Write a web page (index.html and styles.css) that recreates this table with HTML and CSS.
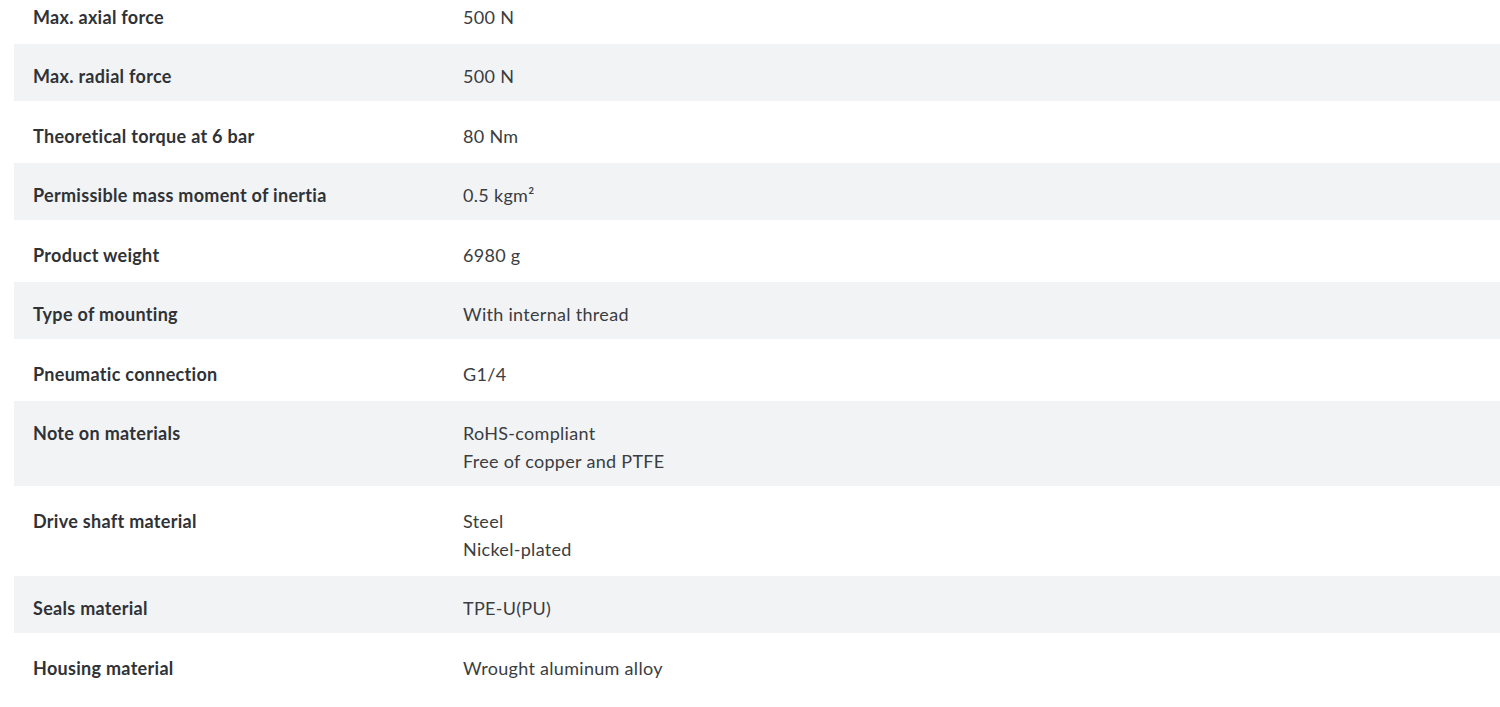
FILE: index.html
```html
<!DOCTYPE html>
<html lang="en">
<head>
<meta charset="utf-8">
<title>Technical data</title>
<link rel="stylesheet" href="styles.css">
</head>
<body>
<div class="specs">
  <div class="row"><div class="label">Max. axial force</div><div class="value">500 N</div></div>
  <div class="row alt"><div class="label">Max. radial force</div><div class="value">500 N</div></div>
  <div class="row"><div class="label">Theoretical torque at 6 bar</div><div class="value">80 Nm</div></div>
  <div class="row alt"><div class="label">Permissible mass moment of inertia</div><div class="value">0.5 kgm²</div></div>
  <div class="row"><div class="label">Product weight</div><div class="value">6980 g</div></div>
  <div class="row alt"><div class="label">Type of mounting</div><div class="value">With internal thread</div></div>
  <div class="row"><div class="label">Pneumatic connection</div><div class="value">G1/4</div></div>
  <div class="row alt"><div class="label">Note on materials</div><div class="value">RoHS-compliant<br>Free of copper and PTFE</div></div>
  <div class="row"><div class="label">Drive shaft material</div><div class="value">Steel<br>Nickel-plated</div></div>
  <div class="row alt"><div class="label">Seals material</div><div class="value">TPE-U(PU)</div></div>
  <div class="row"><div class="label">Housing material</div><div class="value">Wrought aluminum alloy</div></div>
</div>
</body>
</html>
```
FILE: styles.css
```css
html, body {
  margin: 0;
  padding: 0;
  background: #ffffff;
}
body {
  font-family: Lato, "Noto Sans", sans-serif;
  color: #333333;
  font-size: 18px;
  letter-spacing: 0.3px;
  overflow: hidden;
}
.specs {
  display: flex;
  flex-direction: column;
  gap: 3px;
  margin-top: -15.5px;
  margin-left: 14px;
}
.row {
  display: flex;
  padding: 18.25px 0 10.25px;
  line-height: 28px;
}
.row.alt {
  background: #f2f3f5;
}
.label {
  width: 430px;
  padding-left: 19px;
  font-weight: 700;
  color: #2f3236;
}
.value {
  flex: 1;
  color: #3a3d41;
}
```
